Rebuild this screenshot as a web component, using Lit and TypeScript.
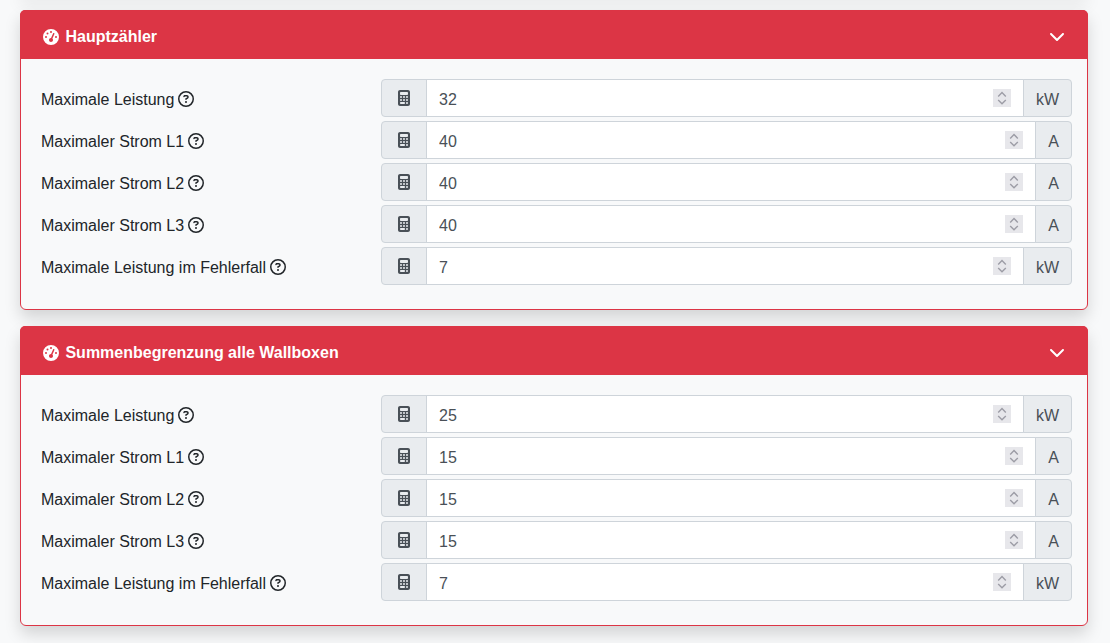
import { LitElement, html, css, svg } from "lit";
import { customElement } from "lit/decorators.js";

const gauge = svg`<path d="M0 256a256 256 0 1 1 512 0A256 256 0 1 1 0 256zM288 96a32 32 0 1 0 -64 0 32 32 0 1 0 64 0zM256 416c35.3 0 64-28.7 64-64c0-17.4-6.9-33.1-18.1-44.6L366 161.7c5.3-12.1-.2-26.3-12.3-31.6s-26.3 .2-31.6 12.3L257.9 288c-.6 0-1.3 0-1.9 0c-35.3 0-64 28.7-64 64s28.7 64 64 64zM176 144a32 32 0 1 0 -64 0 32 32 0 1 0 64 0zM96 288a32 32 0 1 0 0-64 32 32 0 1 0 0 64zm352-32a32 32 0 1 0 -64 0 32 32 0 1 0 64 0z"/>`;
const chevron = svg`<path d="M233.4 406.6c12.5 12.5 32.8 12.5 45.3 0l192-192c12.5-12.5 12.5-32.8 0-45.3s-32.8-12.5-45.3 0L256 338.7 86.6 169.4c-12.5-12.5-32.8-12.5-45.3 0s-12.5 32.8 0 45.3l192 192z"/>`;
const question = svg`<path d="M464 256A208 208 0 1 0 48 256a208 208 0 1 0 416 0zM0 256a256 256 0 1 1 512 0A256 256 0 1 1 0 256zm169.8-90.7c7.9-22.3 29.1-37.3 52.8-37.3h58.3c34.9 0 63.1 28.3 63.1 63.1c0 22.6-12.1 43.5-31.7 54.8L280 264.4c-.2 13-10.9 23.6-24 23.6c-13.3 0-24-10.7-24-24V250.5c0-8.6 4.6-16.5 12.1-20.8l44.3-25.4c4.7-2.7 7.6-7.7 7.6-13.1c0-8.4-6.8-15.1-15.1-15.1H222.6c-3.4 0-6.4 2.1-7.5 5.3l-.4 1.2c-4.4 12.5-18.2 19-30.6 14.6s-19-18.2-14.6-30.6l.4-1.2zM224 352a32 32 0 1 1 64 0 32 32 0 1 1 -64 0z"/>`;
const calculator = svg`<path d="M64 0C28.7 0 0 28.7 0 64V448c0 35.3 28.7 64 64 64H320c35.3 0 64-28.7 64-64V64c0-35.3-28.7-64-64-64H64zM96 64H288c17.7 0 32 14.3 32 32v32c0 17.7-14.3 32-32 32H96c-17.7 0-32-14.3-32-32V96c0-17.7 14.3-32 32-32zm32 160a32 32 0 1 1 -64 0 32 32 0 1 1 64 0zM96 352a32 32 0 1 1 0-64 32 32 0 1 1 0 64zM64 416c0-17.7 14.3-32 32-32h96c17.7 0 32 14.3 32 32s-14.3 32-32 32H96c-17.7 0-32-14.3-32-32zM192 256a32 32 0 1 1 0-64 32 32 0 1 1 0 64zm32 64a32 32 0 1 1 -64 0 32 32 0 1 1 64 0zm64-64a32 32 0 1 1 0-64 32 32 0 1 1 0 64zm32 64a32 32 0 1 1 -64 0 32 32 0 1 1 64 0zM288 448a32 32 0 1 1 0-64 32 32 0 1 1 0 64z"/>`;

interface Row { label: string; value: number; unit: string; }
const rows = (a: number[]): Row[] => [
  { label: "Maximale Leistung", value: a[0], unit: "kW" },
  { label: "Maximaler Strom L1", value: a[1], unit: "A" },
  { label: "Maximaler Strom L2", value: a[2], unit: "A" },
  { label: "Maximaler Strom L3", value: a[3], unit: "A" },
  { label: "Maximale Leistung im Fehlerfall", value: a[4], unit: "kW" },
];
const cards = [
  { title: "Hauptzähler", rows: rows([32, 40, 40, 40, 7]) },
  { title: "Summenbegrenzung alle Wallboxen", rows: rows([25, 15, 15, 15, 7]) },
];

@customElement("app-root")
export class AppRoot extends LitElement {
  static styles = css`
    :host {
      display: block;
      height: 100vh;
      overflow: hidden;
      background: #f8f9fa;
      font-family: "Liberation Sans", Arial, sans-serif;
      font-size: 16px;
      line-height: 24px;
      color: #212529;
    }
    .page {
      display: flex;
      flex-direction: column;
      gap: 16px;
      padding: 0 22px 0 20px;
    }
    .prev {
      height: 6px;
      margin-top: -12px;
      flex: none;
      border-radius: 6px;
      background: #f8f9fa;
      box-shadow: 0 8px 16px rgba(0, 0, 0, 0.15);
    }
    .card {
      flex: none;
      border: 1px solid #dc3545;
      border-radius: 6px;
      background: #f8f9fa;
      box-shadow: 0 8px 16px rgba(0, 0, 0, 0.15);
    }
    .head {
      display: flex;
      align-items: center;
      justify-content: space-between;
      box-sizing: border-box;
      height: 49px;
      margin: -1px -1px 0;
      padding: 14px 21px 10px;
      background: #dc3545;
      color: #fff;
      font-weight: 700;
      border-radius: 5px 5px 0 0;
    }
    .title { display: flex; align-items: center; gap: 4.45px; }
    svg { fill: currentColor; display: block; flex: none; }
    .fw { width: 20px; height: 16px; }
    .toggle { margin-bottom: 2px; }
    .body {
      padding: 20px 15px 24px 20px;
      display: flex;
      flex-direction: column;
      gap: 4px;
    }
    .row {
      display: grid;
      grid-template-columns: 340px 1fr;
      align-items: center;
    }
    .label { display: flex; align-items: center; gap: 4px; padding-top: 4px; }
    .q { width: 16px; height: 16px; margin-bottom: 2px; }
    .group { display: flex; height: 38px; }
    .addon {
      display: flex;
      align-items: center;
      justify-content: center;
      box-sizing: border-box;
      padding: 4px 12px 0;
      background: #e9ecef;
      border: 1px solid #ced4da;
      color: #495057;
      flex: none;
    }
    .addon.left { border-radius: 4px 0 0 4px; width: 46px; padding: 0; }
    .addon.right { border-radius: 0 4px 4px 0; margin-left: -1px; }
    .calc { width: 12px; height: 16px; color: #495057; }
    .field {
      flex: 1;
      min-width: 0;
      display: flex;
      align-items: center;
      gap: 8px;
      box-sizing: border-box;
      margin-left: -1px;
      padding: 0 12px;
      border: 1px solid #ced4da;
      background: #fff;
    }
    input {
      flex: 1;
      min-width: 0;
      padding: 4px 0 0;
      margin: 0;
      border: 0;
      outline: none;
      background: transparent;
      color: #495057;
      font: inherit;
      appearance: textfield;
    }
    input::-webkit-inner-spin-button,
    input::-webkit-outer-spin-button { appearance: none; margin: 0; }
    .spin {
      width: 18px;
      height: 18px;
      background: #e7e7eb;
      fill: none;
      stroke: #9d9da6;
      stroke-width: 1.4;
    }
  `;

  render() {
    return html`<div class="page">
      <div class="prev"></div>
      ${cards.map(
        (c) => html`<section class="card">
          <header class="head">
            <span class="title"><svg class="fw" viewBox="0 0 640 512">
              <g transform="translate(64 0)">${gauge}</g></svg>${c.title}</span>
            <svg class="fw toggle" viewBox="0 0 640 512"><g transform="translate(64 0)">${chevron}</g></svg>
          </header>
          <div class="body">
            ${c.rows.map(
              (r) => html`<div class="row">
                <label class="label">${r.label}<svg class="q" viewBox="0 0 512 512">${question}</svg></label>
                <div class="group">
                  <span class="addon left"><svg class="calc" viewBox="0 0 384 512">${calculator}</svg></span>
                  <div class="field">
                    <input type="number" .value=${String(r.value)} />
                    <svg class="spin" viewBox="0 0 18 18"><path d="M5.2 7.4 9 3.6l3.8 3.8M5.2 11 9 14.8l3.8-3.8"/></svg>
                  </div>
                  <span class="addon right">${r.unit}</span>
                </div>
              </div>`
            )}
          </div>
        </section>`
      )}
    </div>`;
  }
}
